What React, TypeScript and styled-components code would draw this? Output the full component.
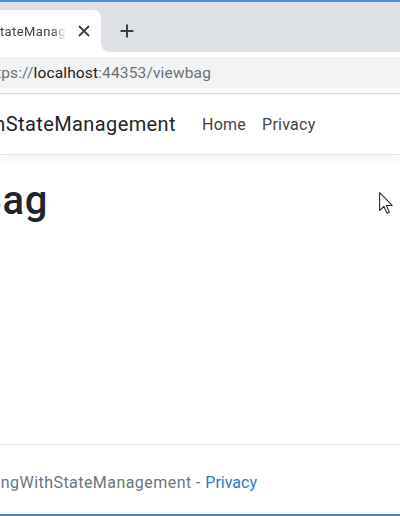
import React from "react";
import styled, { createGlobalStyle } from "styled-components";

const FONT = `"Roboto", "Noto Sans", sans-serif`;

const GlobalStyle = createGlobalStyle`
  html, body { margin: 0; padding: 0; width: 400px; height: 516px; overflow: hidden; background: #fff; }
  body { font-family: ${FONT}; }
`;

const Window = styled.div`
  position: relative;
  box-sizing: border-box;
  width: 400px;
  height: 516px;
  display: flex;
  flex-direction: column;
  overflow: hidden;
  border-top: 2px solid #4f8fd3;
  border-bottom: 2px solid #4a8bbf;
`;

const TabStrip = styled.div`
  flex: none;
  height: 50px;
  background: #dee1e6;
  display: flex;
  align-items: flex-end;
`;

const Tab = styled.div`
  position: relative;
  flex: none;
  width: 101px;
  height: 42px;
  background: #fff;
  border-top-right-radius: 8px;
  display: flex;
  align-items: center;
  &::after {
    content: "";
    position: absolute;
    right: -8px;
    bottom: 0;
    width: 8px;
    height: 8px;
    background: radial-gradient(circle at 100% 0, transparent 7.5px, #fff 8px);
  }
`;

const RightAnchor = styled.div<{ $w: number }>`
  flex: none;
  width: ${(p) => p.$w}px;
  display: flex;
  justify-content: flex-end;
  white-space: nowrap;
`;

const TabTitle = styled.span`
  font-size: 13px;
  letter-spacing: 0.4px;
  color: #3c4043;
  -webkit-mask-image: linear-gradient(to left, transparent 0, #000 14px);
  mask-image: linear-gradient(to left, transparent 0, #000 14px);
`;

const CloseIcon = styled.svg`
  flex: none;
  margin-left: 12px;
  width: 12px;
  height: 12px;
`;

const NewTabButton = styled.div`
  flex: none;
  width: 28px;
  height: 28px;
  margin-left: 12px;
  margin-bottom: 7px;
  display: flex;
  align-items: center;
  justify-content: center;
`;

const Toolbar = styled.div`
  flex: none;
  height: 41px;
  background: #fff;
  display: flex;
  align-items: center;
  border-bottom: 1px solid #dadce0;
`;

const Omnibox = styled.div`
  flex: 1;
  height: 31px;
  background: #f1f3f4;
  display: flex;
  align-items: center;
`;

const UrlText = styled.span`
  font-size: 15.5px;
  letter-spacing: 0.15px;
  color: #6d7175;
`;

const UrlHost = styled.span`
  color: #202124;
`;

const Page = styled.div`
  flex: 1;
  display: flex;
  flex-direction: column;
  background: #fff;
`;

const Navbar = styled.header`
  flex: none;
  height: 60px;
  display: flex;
  align-items: center;
  border-bottom: 1px solid #e5e5e5;
  box-shadow: 0 4px 12px rgba(0, 0, 0, 0.05);
`;

const Brand = styled.span`
  font-size: 20px;
  letter-spacing: 0.4px;
  color: #212529;
`;

const NavList = styled.nav`
  display: flex;
  margin-left: 18px;
`;

const NavLink = styled.span`
  padding: 0 8px;
  font-size: 16px;
  letter-spacing: 0.25px;
  color: #3f4449;
`;

const Main = styled.main`
  padding-top: 22px;
`;

const Heading = styled.h1`
  margin: 0;
  font-size: 40px;
  font-weight: 500;
  letter-spacing: 0.6px;
  line-height: 1.2;
  color: #212529;
`;

const Footer = styled.footer`
  margin-top: auto;
  box-sizing: border-box;
  height: 70px;
  padding-top: 6px;
  border-top: 1px solid #dee2e6;
  display: flex;
  align-items: center;
`;

const FooterText = styled.span`
  font-size: 16px;
  letter-spacing: 0.45px;
  color: #6c757d;
`;

const FooterLink = styled.span`
  letter-spacing: 0;
  color: #2a78d6;
`;

const Cursor = styled.svg`
  position: absolute;
  left: 379px;
  top: 190px;
  width: 14px;
  height: 22px;
`;

export default function App() {
  return (
    <>
      <GlobalStyle />
      <Window>
        <TabStrip>
          <Tab>
            <RightAnchor $w={66}>
              <TabTitle>WorkingWithStateManag</TabTitle>
            </RightAnchor>
            <CloseIcon viewBox="0 0 12 12">
              <path d="M1.5 1.5 L10.5 10.5 M10.5 1.5 L1.5 10.5" stroke="#3c4043" strokeWidth="1.8" strokeLinecap="round" />
            </CloseIcon>
          </Tab>
          <NewTabButton>
            <svg width="16" height="16" viewBox="0 0 16 16">
              <path d="M8 1.5 V14.5 M1.5 8 H14.5" stroke="#3c4043" strokeWidth="2" />
            </svg>
          </NewTabButton>
        </TabStrip>
        <Toolbar>
          <Omnibox>
            <RightAnchor $w={211}>
              <UrlText>
                https://<UrlHost>localhost</UrlHost>:44353/viewbag
              </UrlText>
            </RightAnchor>
          </Omnibox>
        </Toolbar>
        <Page>
          <Navbar>
            <RightAnchor $w={176}>
              <Brand>WorkingWithStateManagement</Brand>
            </RightAnchor>
            <NavList>
              <NavLink>Home</NavLink>
              <NavLink>Privacy</NavLink>
            </NavList>
          </Navbar>
          <Main>
            <RightAnchor $w={48}>
              <Heading>ViewBag</Heading>
            </RightAnchor>
          </Main>
          <Footer>
            <RightAnchor $w={257}>
              <FooterText>
                © 2020 - WorkingWithStateManagement - <FooterLink>Privacy</FooterLink>
              </FooterText>
            </RightAnchor>
          </Footer>
        </Page>
        <Cursor viewBox="0 0 12 19">
          <path d="M0.5 0.5 L0.5 16 L4.2 12.4 L6.8 18.3 L8.9 17.4 L6.3 11.6 L11.3 11.6 Z" fill="#fff" stroke="#222" strokeWidth="0.9" strokeLinejoin="round" />
        </Cursor>
      </Window>
    </>
  );
}
